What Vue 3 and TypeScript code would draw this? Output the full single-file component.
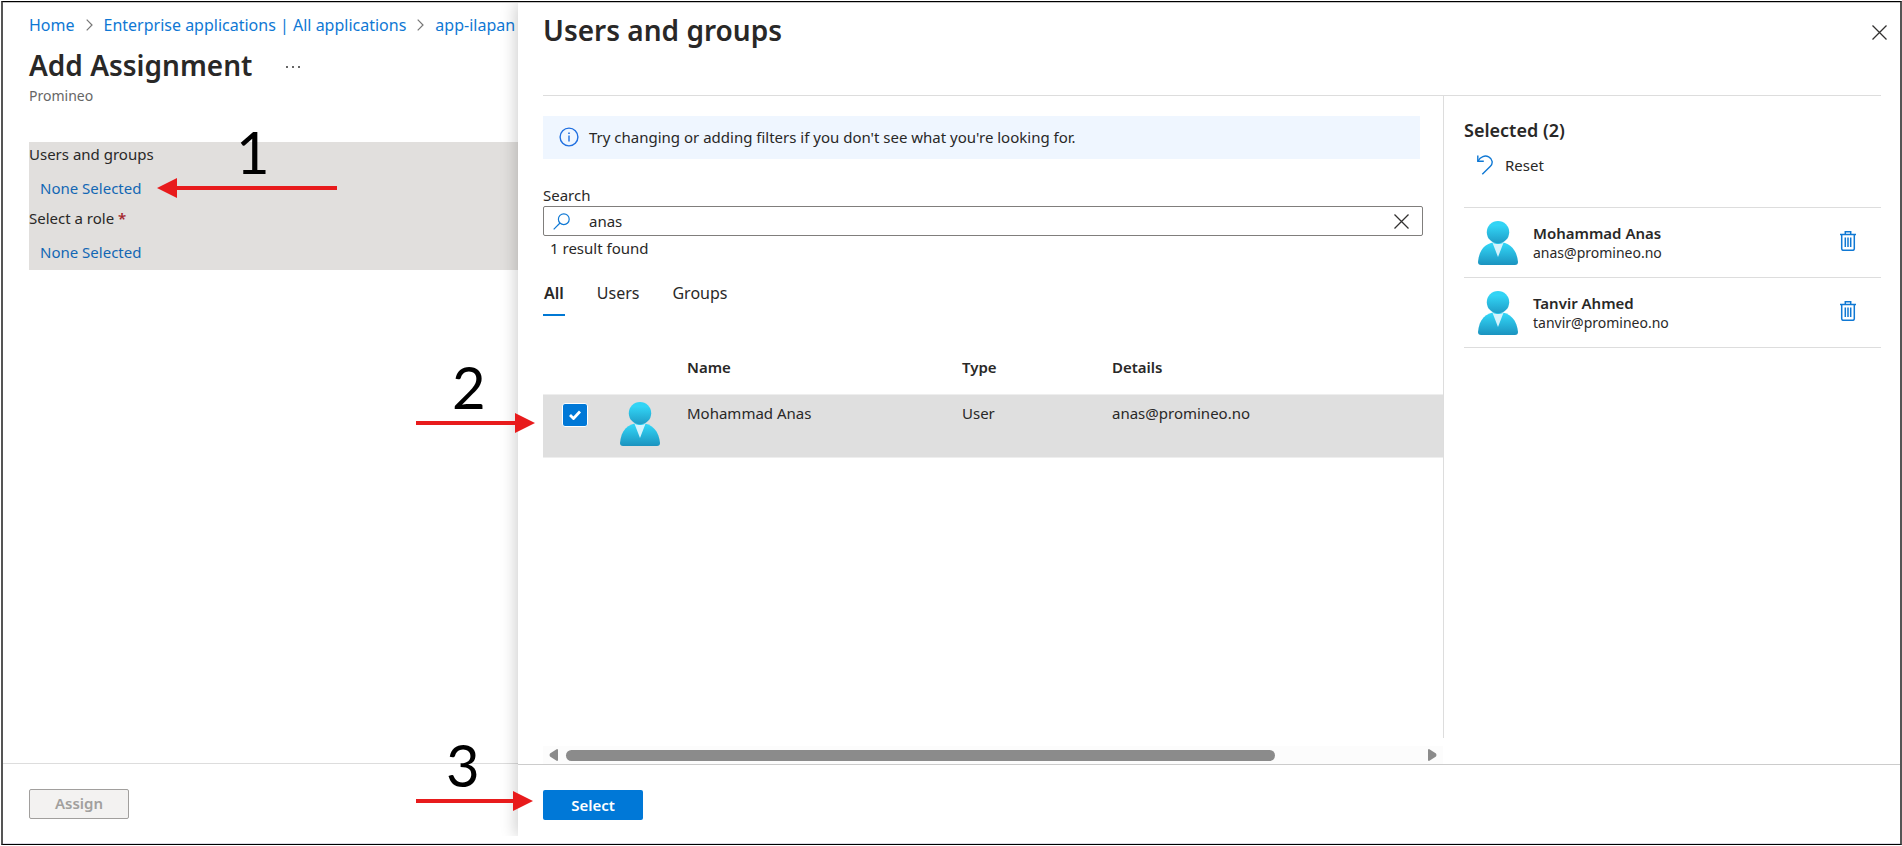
<script setup lang="ts">
import { ref } from 'vue'

interface Person {
  name: string
  type: string
  email: string
}

const query = ref('anas')
const checked = ref(true)
const activeTab = ref('All')
const tabs: string[] = ['All', 'Users', 'Groups']
const results: Person[] = [{ name: 'Mohammad Anas', type: 'User', email: 'anas@promineo.no' }]
const selected: Person[] = [
  { name: 'Mohammad Anas', type: 'User', email: 'anas@promineo.no' },
  { name: 'Tanvir Ahmed', type: 'User', email: 'tanvir@promineo.no' },
]
</script>

<template>
  <div class="frame">
    <svg class="defs" aria-hidden="true">
      <defs>
        <linearGradient id="head" x1="0" y1="0" x2="0" y2="1">
          <stop offset="0.2" stop-color="#32d4f5" />
          <stop offset="1" stop-color="#1f9cc6" />
        </linearGradient>
        <linearGradient id="torso" x1="0" y1="0" x2="0" y2="1">
          <stop offset="0.1" stop-color="#32d4f5" />
          <stop offset="1" stop-color="#1b93bf" />
        </linearGradient>
        <symbol id="person" viewBox="0 0 40 44">
          <path d="M37 44a3 3 0 0 0 3-3C39 30 33 21 20 21S1 29 0 41a3 3 0 0 0 3 3z" fill="url(#torso)" />
          <path d="M20 23c-2 0-4-.5-5.600-1.500L20 36l5.600-14.500C24 22.500 22 23 20 23z" fill="#d5f3fc" />
          <circle cx="20" cy="11.200" r="11.200" fill="url(#head)" />
        </symbol>
      </defs>
    </svg>

    <main class="page">
      <nav class="crumbs" aria-label="Breadcrumb">
        <a href="#">Home</a>
        <svg width="7" height="12" viewBox="0 0 7 12"><path d="M.7.7 6 6 .7 11.300" fill="none" stroke="#767676" stroke-width="1.200" /></svg>
        <a href="#">Enterprise applications | All applications</a>
        <svg width="7" height="12" viewBox="0 0 7 12"><path d="M.7.7 6 6 .7 11.300" fill="none" stroke="#767676" stroke-width="1.200" /></svg>
        <a href="#">app-ilapan</a>
      </nav>
      <div class="title-row">
        <h1>Add Assignment</h1>
        <button class="more" aria-label="More">
          <svg width="14" height="2" viewBox="0 0 14 2" fill="#666"><path d="M0 0h2v2H0zM6 0h2v2H6zM12 0h2v2h-2z" /></svg>
        </button>
      </div>
      <p class="tenant">Promineo</p>
      <section class="choices">
        <div class="choice">
          <span>Users and groups</span>
          <a href="#">None Selected</a>
        </div>
        <div class="choice">
          <span>Select a role <b class="required">*</b></span>
          <a href="#">None Selected</a>
        </div>
      </section>
      <footer class="page-footer">
        <button class="assign" disabled>Assign</button>
      </footer>
    </main>

    <aside class="panel">
      <header class="panel-header">
        <h2>Users and groups</h2>
        <button class="close" aria-label="Close">
          <svg width="15" height="15" viewBox="0 0 15 15"><path d="M.5.5l14 14M14.500.5l-14 14" stroke="#323130" stroke-width="1.300" /></svg>
        </button>
      </header>

      <div class="panel-body">
        <section class="finder">
          <div class="info">
            <svg width="20" height="20" viewBox="0 0 20 20">
              <circle cx="10" cy="10" r="8.900" fill="none" stroke="#1f6fe0" stroke-width="1.400" />
              <path d="M9.300 8.500h1.400v6H9.300zM9.200 5.500h1.600v1.600H9.200z" fill="#1f6fe0" />
            </svg>
            <span>Try changing or adding filters if you don't see what you're looking for.</span>
          </div>

          <label class="search-label" for="search">Search</label>
          <div class="search-box">
            <svg width="17" height="17" viewBox="0 0 17 17" fill="none" stroke="#0f78d4" stroke-width="1.200">
              <circle cx="10.800" cy="6.200" r="5.400" /><path d="M7 10 .7 16.300" />
            </svg>
            <input id="search" v-model="query" type="text" />
            <button class="clear" aria-label="Clear search" @click="query = ''">
              <svg width="15" height="15" viewBox="0 0 15 15"><path d="M.5.5l14 14M14.500.5l-14 14" stroke="#323130" stroke-width="1.300" /></svg>
            </button>
          </div>
          <p class="count">1 result found</p>

          <div class="tabs" role="tablist">
            <button
              v-for="tab in tabs"
              :key="tab"
              role="tab"
              class="tab"
              :class="{ active: tab === activeTab }"
              :aria-selected="tab === activeTab"
              @click="activeTab = tab"
            >{{ tab }}</button>
          </div>

          <table class="results">
            <colgroup>
              <col class="col-check" /><col class="col-avatar" /><col class="col-name" /><col class="col-type" /><col />
            </colgroup>
            <thead>
              <tr><th></th><th></th><th>Name</th><th>Type</th><th>Details</th></tr>
            </thead>
            <tbody>
              <tr v-for="person in results" :key="person.email">
                <td class="check-cell"><input v-model="checked" type="checkbox" :aria-label="person.name" /></td>
                <td class="avatar-cell"><svg class="avatar"><use href="#person" /></svg></td>
                <td>{{ person.name }}</td>
                <td>{{ person.type }}</td>
                <td>{{ person.email }}</td>
              </tr>
            </tbody>
          </table>

          <div class="scrollbar">
            <svg width="9" height="12" viewBox="0 0 9 12"><path d="M9 1v10q0 1-1 1L1 7.500Q0 6 1 4.500L8 0q1 0 1 1z" fill="#8b8b8b" /></svg>
            <div class="track"><div class="thumb"></div></div>
            <svg width="9" height="12" viewBox="0 0 9 12"><path d="M0 1v10q0 1 1 1l7-4.500q1-1.500 0-3L1 0Q0 0 0 1z" fill="#8b8b8b" /></svg>
          </div>
        </section>

        <section class="selection">
          <h3>Selected (2)</h3>
          <button class="reset">
            <svg width="16" height="20" viewBox="0 0 16 20" fill="none" stroke="#0f78d4" stroke-width="1.400">
              <path d="M.8.5v5.800h6" /><path d="M1 6C3.500 1.500 8 0 11.700 1.900c4 2 4.500 6.600 1.700 9.400L5.300 19.300" />
            </svg>
            <span>Reset</span>
          </button>
          <ul>
            <li v-for="person in selected" :key="person.email">
              <svg class="avatar"><use href="#person" /></svg>
              <div class="who">
                <strong>{{ person.name }}</strong>
                <span>{{ person.email }}</span>
              </div>
              <button class="trash" :aria-label="'Remove ' + person.name">
                <svg width="16" height="20" viewBox="0 0 16 20" fill="none" stroke="#0f78d4" stroke-width="1.500">
                  <path d="M0 3.400h16M5.300 3V.7h5.400V3M1.700 3.400v14.400q0 1.500 1.500 1.500h9.600q1.500 0 1.500-1.500V3.400M5.300 6.500v9.500M8 6.500v9.500M10.700 6.500v9.500" />
                </svg>
              </button>
            </li>
          </ul>
        </section>
      </div>

      <footer class="panel-footer">
        <button class="select">Select</button>
      </footer>
    </aside>

    <div class="step step-one">
      <span>1</span>
      <svg width="180" height="20" viewBox="0 0 180 20" fill="#e81b1c"><path d="M0 10 20 0v8h160v4H20v8z" /></svg>
    </div>
    <div class="step step-two">
      <span>2</span>
      <svg width="119" height="20" viewBox="0 0 119 20" fill="#e81b1c"><path d="M119 10 99 0v8H0v4h99v8z" /></svg>
    </div>
    <div class="step step-three">
      <span>3</span>
      <svg width="117" height="20" viewBox="0 0 117 20" fill="#e81b1c"><path d="M117 10 97 0v8H0v4h97v8z" /></svg>
    </div>
  </div>
</template>

<style>
body {
  margin: 0;
  background: #fff;
}
</style>

<style scoped>
* {
  box-sizing: border-box;
}
.frame {
  position: relative;
  display: flex;
  min-height: calc(100vh - 2px);
  border: 1px solid #000;
  border-width: 1px 2px;
  border-left-color: #555;
  border-right-color: #555;
  box-shadow: inset 0 1px 0 #c4c4c4, inset 0 -1px 0 #dcdce6;
  margin: 1px 0 1px 1px;
  color: #292827;
  font: 15px/20px "Noto Sans", "Open Sans", sans-serif;
}
.defs {
  position: absolute;
  width: 0;
  height: 0;
}
h1, h2, h3, p, ul {
  margin: 0;
  padding: 0;
}
h1, h2 {
  font-size: 28px;
  line-height: 36px;
  font-weight: 600;
}
button {
  padding: 0;
  border: 0;
  background: none;
  color: inherit;
  font: inherit;
}
a {
  color: #0f78d4;
  text-decoration: none;
}
svg {
  display: block;
  flex: none;
}
.avatar {
  width: 40px;
  height: 44px;
}

/* Assignment page */
.page {
  display: flex;
  flex-direction: column;
  flex: 0 0 515px;
  min-width: 0;
  overflow: hidden;
  padding-top: 11px;
}
.crumbs {
  display: flex;
  align-items: center;
  gap: 11px;
  padding-left: 26px;
  font-size: 16px;
  line-height: 24px;
  white-space: nowrap;
}
.title-row {
  display: flex;
  align-items: center;
  gap: 34px;
  margin-top: 10px;
  padding-left: 26px;
}
.more {
  padding-top: 3px;
}
.tenant {
  margin-top: 3px;
  padding-left: 26px;
  color: #666;
  font-size: 14px;
}
.choices {
  margin: 36px 0 0 26px;
  background: #e1dfdd;
}
.choice {
  display: flex;
  flex-direction: column;
  align-items: flex-start;
  gap: 14px;
  height: 64px;
  padding-top: 2px;
}
.choice a {
  margin-left: 11px;
  color: #1267b4;
}
.required {
  color: #a4262c;
  font-weight: 600;
}
.page-footer {
  height: 81px;
  margin-top: auto;
  padding: 25px 0 0 26px;
  border-top: 1px solid #ddd;
}
.assign,
.select {
  width: 100px;
  height: 30px;
  border-radius: 2px;
  font-weight: 600;
}
.assign {
  padding-bottom: 2px;
  border: 1px solid #a19f9d;
  background: #f3f2f1;
  color: #a19f9d;
}
.select {
  background: #0078d7;
  color: #fff;
}

/* Picker panel */
.panel {
  display: flex;
  flex-direction: column;
  flex: 1;
  min-width: 0;
  margin: 1px 0 8px;
  background: #fff;
  box-shadow: -3px 0 14px rgba(0, 0, 0, 0.18);
  clip-path: inset(0 0 0 -20px);
}
.panel-header {
  display: flex;
  justify-content: space-between;
  align-items: flex-start;
  height: 93px;
  margin: 0 19px 0 25px;
  padding-top: 9px;
  border-bottom: 1px solid #ddd;
}
.close {
  margin: 13px -6px 0 0;
}
.panel-body {
  display: flex;
  flex: 1;
  margin: 0 19px 0 25px;
}
.finder {
  display: flex;
  flex-direction: column;
  flex: 1;
  min-width: 0;
}
.info {
  display: flex;
  align-items: center;
  gap: 10px;
  height: 43px;
  margin: 20px 23px 0 0;
  padding: 0 0 2px 16px;
  background: #eff6ff;
}
.search-label {
  margin: 26px 0 1px;
}
.search-box {
  display: flex;
  align-items: center;
  height: 30px;
  margin-right: 20px;
  padding: 0 13px 0 9px;
  border: 1px solid #807e7c;
  border-radius: 2px;
}
.search-box input {
  flex: 1;
  min-width: 0;
  margin-left: 19px;
  padding: 0;
  border: 0;
  outline: 0;
  background: none;
  color: inherit;
  font: inherit;
}
.count {
  margin: 2px 0 0 7px;
}
.tabs {
  display: flex;
  gap: 31px;
  margin-top: 23px;
}
.tab {
  height: 35px;
  padding: 0 1px 9px;
  border-bottom: 2px solid transparent;
  font-size: 16px;
  line-height: 24px;
}
.tab.active {
  border-color: #0078d4;
  font-weight: 600;
}
.results {
  width: 100%;
  margin-top: 34px;
  border-collapse: separate;
  border-spacing: 0;
  table-layout: fixed;
}
.col-check {
  width: 77px;
}
.col-avatar {
  width: 67px;
}
.col-name {
  width: 275px;
}
.col-type {
  width: 150px;
}
.results th {
  height: 44px;
  padding: 0 0 10px;
  text-align: left;
  font-weight: 600;
}
.results td {
  height: 64px;
  padding: 8px 0 0;
  border: 1px solid #eee;
  border-width: 1px 0;
  background: #dfdfdf;
  vertical-align: top;
}
.results .check-cell {
  padding-left: 19px;
}
.results .avatar-cell {
  padding-top: 7px;
}
.check-cell input {
  appearance: none;
  display: block;
  width: 26px;
  height: 24px;
  margin: 0;
  border: 1px solid #fff;
  border-radius: 3px;
  background: #fff;
}
.check-cell input:checked {
  background: #0078d7 url("data:image/svg+xml,%3Csvg xmlns='http://www.w3.org/2000/svg' width='12' height='10'%3E%3Cpath d='M1 5l3.500 3.500L11 1.500' fill='none' stroke='white' stroke-width='2.800'/%3E%3C/svg%3E") center / 12px 10px no-repeat;
}
.scrollbar {
  display: flex;
  align-items: center;
  gap: 8px;
  height: 18px;
  margin-top: auto;
  padding: 0 6px;
  background: #fcfcfc;
}
.track {
  flex: 1;
}
.thumb {
  width: 83%;
  height: 11px;
  border-radius: 6px;
  background: #8b8b8b;
}
.selection {
  flex: 0 0 438px;
  margin-bottom: 26px;
  padding: 22px 0 0 20px;
  border-left: 1px solid #ddd;
}
h3 {
  font-size: 18px;
  line-height: 24px;
  font-weight: 600;
}
.reset {
  display: flex;
  align-items: center;
  gap: 12px;
  height: 22px;
  margin: 12px 0 0 13px;
}
.selection ul {
  margin-top: 31px;
  border-top: 1px solid #ddd;
  list-style: none;
}
.selection li {
  display: flex;
  align-items: center;
  height: 70px;
  padding: 0 25px 0 14px;
  border-bottom: 1px solid #ddd;
}
.who {
  display: flex;
  flex-direction: column;
  flex: 1;
  margin-left: 15px;
}
.who strong {
  font-weight: 600;
}
.who span {
  font-size: 14px;
}
.trash {
  padding-bottom: 4px;
}
.panel-footer {
  height: 72px;
  padding: 25px 0 0 25px;
  border-top: 1px solid #ccc;
}

/* Numbered callouts lying over the page */
.step {
  position: absolute;
  color: #000;
  pointer-events: none;
}
.step span {
  display: block;
  font: 58px/53px Lato, "Open Sans", sans-serif;
}
.step-one {
  top: 123px;
  left: 154px;
}
.step-one span {
  padding-left: 79px;
}
.step-two {
  top: 358px;
  left: 413px;
}
.step-two span {
  padding-left: 36px;
}
.step-three {
  bottom: 33px;
  left: 413px;
}
.step-three span {
  padding-left: 30px;
}
</style>
